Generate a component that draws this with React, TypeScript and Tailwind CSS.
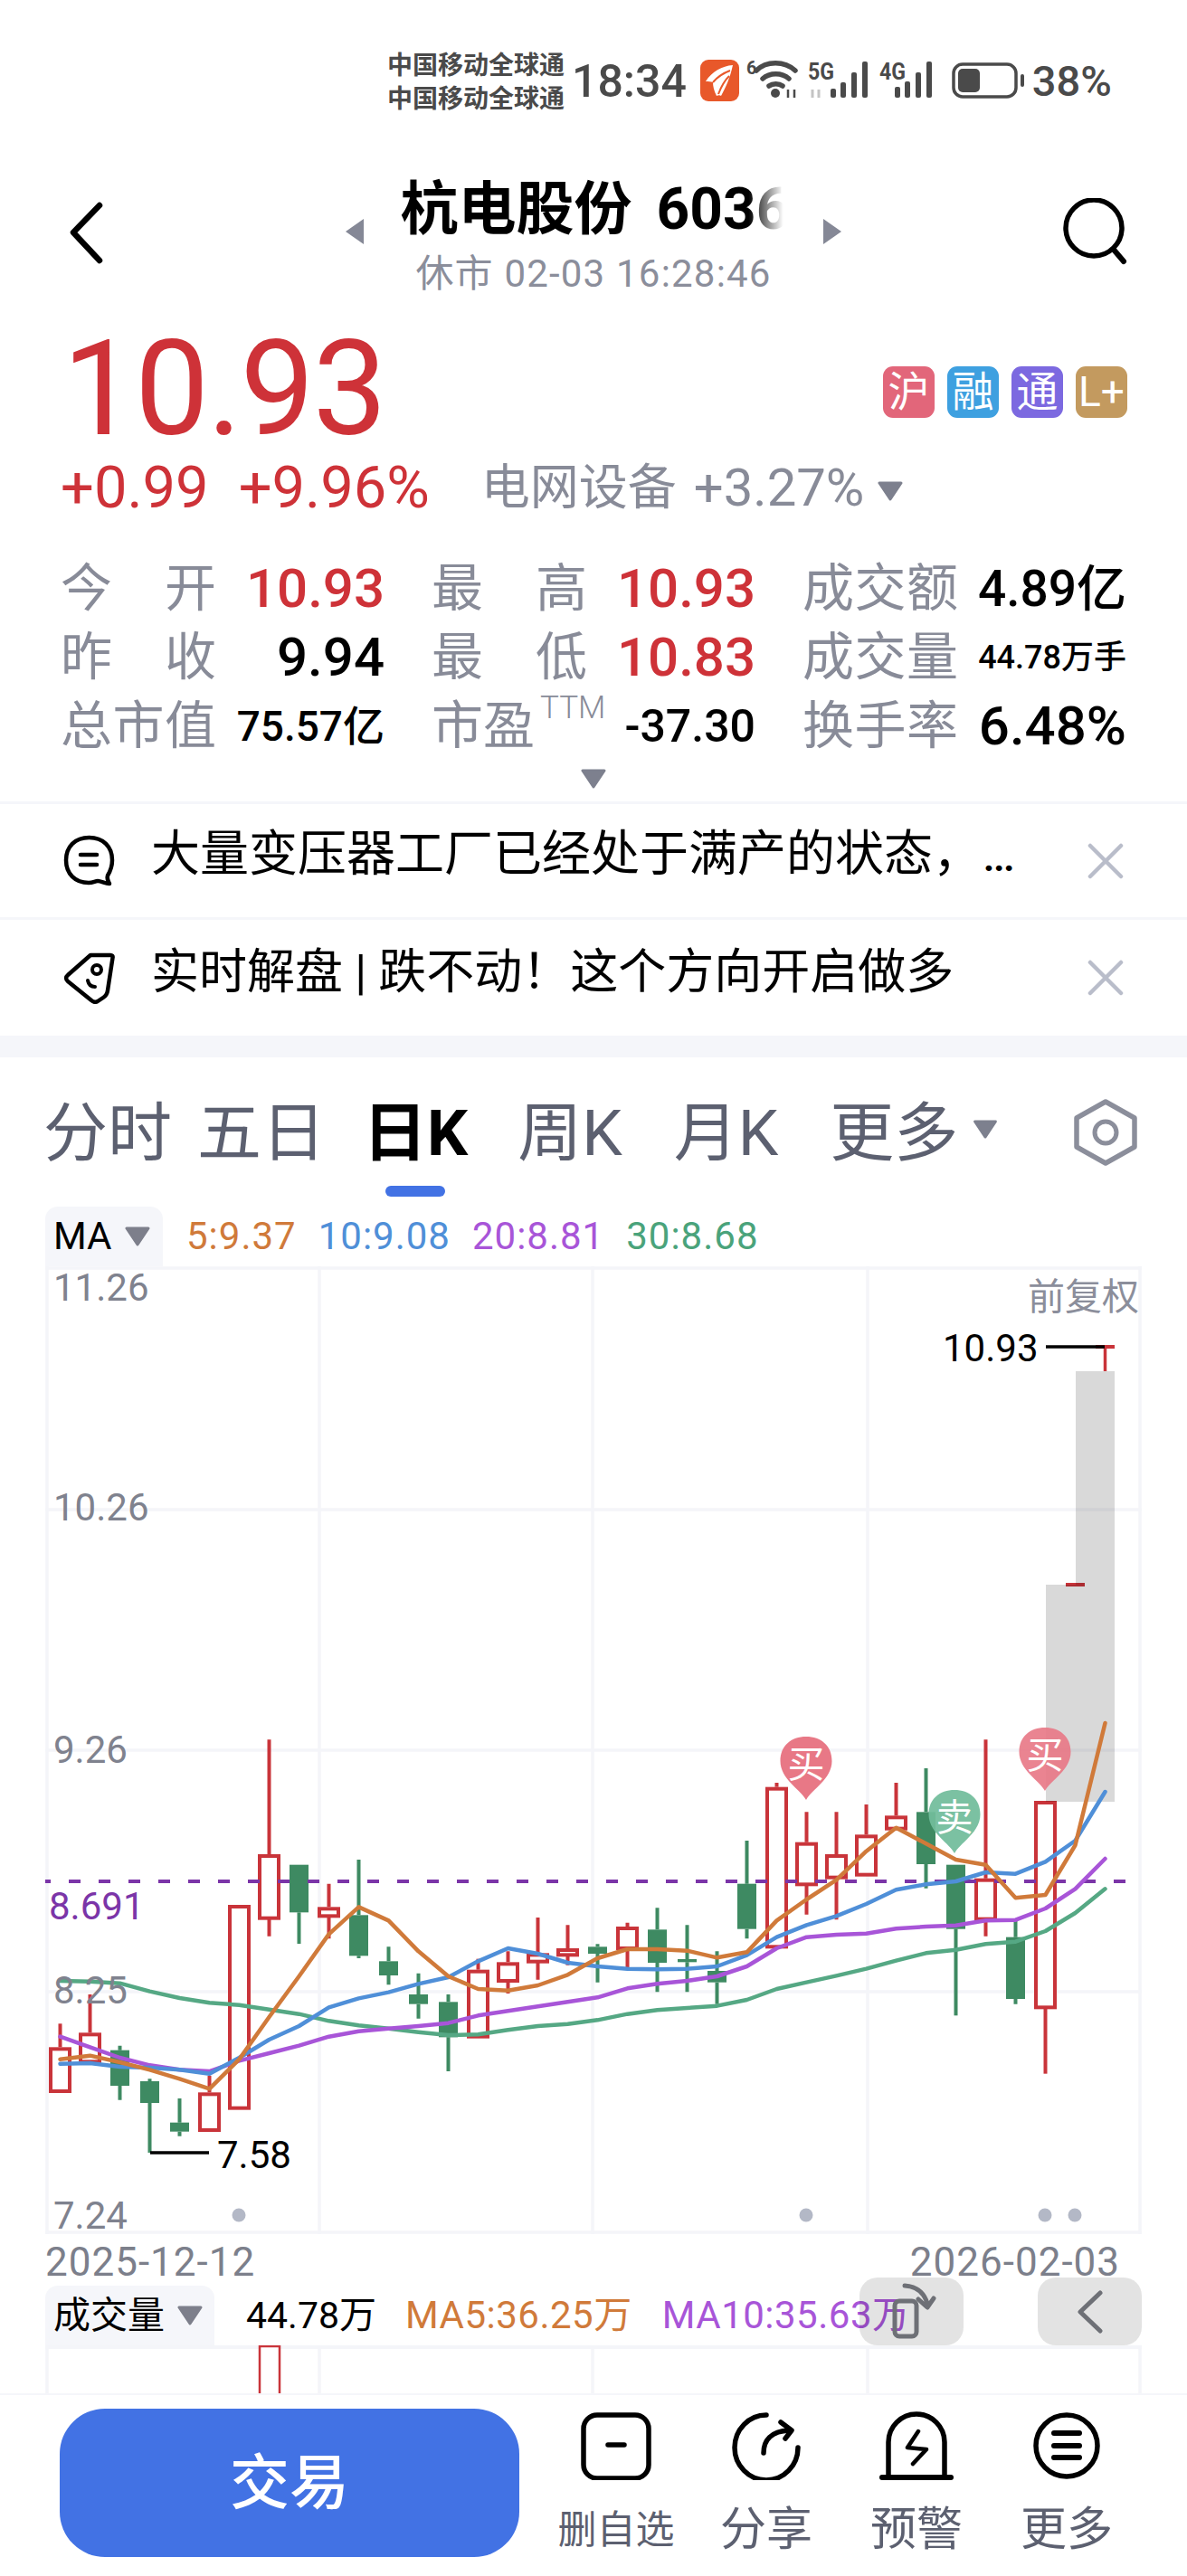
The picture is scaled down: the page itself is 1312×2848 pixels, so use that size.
import React from 'react';

type Candle = ['r' | 'g', number, number, number, number];

// values are read off the chart: y in thirds of a pixel from 1900
const candles: Candle[] = [
  ['r', 1012, 1090, 1236, 1236],
  ['r', 915, 1042, 1138, 1138],
  ['g', 1085, 1100, 1218, 1265],
  ['g', 1195, 1203, 1275, 1440],
  ['g', 1260, 1340, 1370, 1385],
  ['r', 1185, 1240, 1365, 1365],
  ['r', 618, 618, 1292, 1292],
  ['r', 70, 450, 662, 722],
  ['g', 485, 485, 643, 747],
  ['r', 548, 625, 655, 730],
  ['g', 468, 652, 787, 795],
  ['g', 757, 805, 852, 883],
  ['g', 845, 915, 947, 995],
  ['g', 915, 940, 1057, 1170],
  ['r', 797, 833, 1055, 1055],
  ['r', 772, 808, 870, 912],
  ['r', 660, 778, 806, 866],
  ['r', 685, 762, 784, 818],
  ['g', 748, 757, 780, 875],
  ['r', 677, 690, 762, 825],
  ['g', 628, 700, 810, 907],
  ['g', 685, 798, 808, 907],
  ['g', 772, 837, 875, 947],
  ['g', 405, 548, 698, 730],
  ['r', 213, 227, 757, 757],
  ['r', 310, 410, 550, 650],
  ['r', 310, 450, 527, 667],
  ['r', 285, 385, 518, 518],
  ['r', 213, 322, 365, 365],
  ['g', 165, 310, 483, 563],
  ['g', 485, 485, 698, 985],
  ['r', 70, 530, 665, 722],
  ['g', 670, 725, 930, 947],
  ['r', 273, 273, 958, 1178],
];

const ma5 = [1130, 1118, 1140, 1165, 1195, 1228, 1130, 990, 855, 715, 625, 670, 772, 855, 897, 902, 885, 850, 795, 765, 765, 770, 793, 775, 670, 600, 535, 440, 362, 415, 468, 485, 595, 585, 420, 15];
const ma10 = [1145, 1143, 1155, 1158, 1165, 1178, 1125, 1065, 1020, 958, 928, 908, 880, 858, 805, 762, 780, 810, 822, 830, 832, 830, 822, 785, 725, 685, 655, 615, 568, 550, 540, 510, 515, 475, 405, 243];
const ma20 = [1055, 1090, 1125, 1150, 1165, 1170, 1135, 1110, 1085, 1055, 1037, 1028, 1020, 1010, 985, 970, 955, 940, 925, 895, 880, 870, 855, 822, 762, 725, 717, 713, 697, 690, 686, 670, 668, 630, 565, 465];
const ma30 = [870, 872, 878, 905, 927, 943, 950, 965, 980, 1003, 1018, 1028, 1040, 1050, 1048, 1033, 1020, 1013, 1000, 980, 967, 960, 953, 933, 897, 875, 853, 830, 803, 778, 767, 748, 740, 705, 645, 565];

const cx = (i: number) => 66.5 + 33 * i;
const cy = (z: number) => 1900 + z / 3;
const points = (line: number[]) => line.map((z, i) => `${cx(i)},${cy(z)}`).join(' ');

const RED = '#c9343a';
const GREEN = '#3e8a62';
const GRID = '#f4f5f9';

function Caret({ className }: { className: string }) {
  return (
    <svg viewBox="0 0 30 22" className={className}>
      <path d="M3 2 H27 L15 20 Z" fill="currentColor" stroke="currentColor" strokeWidth="3" strokeLinejoin="round" />
    </svg>
  );
}

function StatusBar() {
  return (
    <div className="flex h-[130px] items-start pl-[428px] pt-[54px] text-[#4a4a4a]">
      <div className="w-[196px] text-[28px] font-bold leading-[37px]">
        <div>中国移动全球通</div>
        <div>中国移动全球通</div>
      </div>
      <div className="ml-[8px] mt-[8px] text-[50px] font-medium leading-[56px]">18:34</div>
      <svg viewBox="770 54 360 66" className="ml-[14px] h-[66px] w-[360px]">
        <rect x="771" y="66" width="43" height="46" rx="9" fill="#e8582a" />
        <path d="M807 72 C795 73 784 79 777 90 C780 90 783 90 785 91 C785 95 786 100 789 106 C791 105 793 105 794 106 C799 97 804 86 807 72 Z" fill="#fff" />
        <path d="M804 78 C796 81 790 85 785 91 M803 84 C798 89 794 96 791 104" fill="none" stroke="#e8582a" strokeWidth="2" />
        <text x="822" y="82" fontSize="20" fontWeight="700" fill="#4a4a4a">6</text>
        <g fill="none" stroke="#4a4a4a" strokeWidth="5.5" strokeLinecap="round">
          <path d="M833 78 C844 67 864 67 876 78" />
          <path d="M840 87 C848 80 861 80 869 87" />
          <path d="M847 95 C851 92 858 92 862 95" />
        </g>
        <circle cx="854" cy="103" r="5" fill="#4a4a4a" />
        <path d="M868 99 V108 M875 99 V108" stroke="#4a4a4a" strokeWidth="2.5" />
        <text x="890" y="88" fontSize="25" fontWeight="700" fill="#4a4a4a" textLength="29" lengthAdjust="spacingAndGlyphs">5G</text>
        <path d="M895 99 V108 M902 99 V108" stroke="#c4c4c4" strokeWidth="3" />
        <rect x="915" y="98" width="6" height="10" rx="2" fill="#4a4a4a" />
        <rect x="926" y="91" width="6" height="17" rx="2" fill="#4a4a4a" />
        <rect x="938" y="80" width="6" height="28" rx="2" fill="#4a4a4a" />
        <rect x="950" y="68" width="6" height="40" rx="2" fill="#4a4a4a" />
        <text x="969" y="88" fontSize="25" fontWeight="700" fill="#4a4a4a" textLength="29" lengthAdjust="spacingAndGlyphs">4G</text>
        <rect x="986" y="96" width="6" height="12" rx="2" fill="#4a4a4a" />
        <rect x="997" y="90" width="6" height="18" rx="2" fill="#4a4a4a" />
        <rect x="1009" y="80" width="6" height="28" rx="2" fill="#4a4a4a" />
        <rect x="1021" y="68" width="6" height="40" rx="2" fill="#4a4a4a" />
        <rect x="1051" y="71" width="69" height="36" rx="10" fill="none" stroke="#4a4a4a" strokeWidth="3.5" />
        <rect x="1056" y="76" width="24" height="26" rx="5" fill="#4a4a4a" />
        <rect x="1125" y="82" width="4" height="14" rx="2" fill="#4a4a4a" />
      </svg>
      <div className="ml-[8px] mt-[8px] text-[47px] font-medium leading-[56px]">38%</div>
    </div>
  );
}

function NavBar() {
  return (
    <div className="flex h-[200px] items-start pl-[74px] pt-[64px]">
      <svg viewBox="0 0 44 70" className="mt-[29px] h-[70px] w-[44px]">
        <path d="M36 4 L7 34 L36 65" fill="none" stroke="#000" strokeWidth="6.5" strokeLinecap="round" strokeLinejoin="round" />
      </svg>
      <div className="ml-[264px] flex w-[548px] flex-col items-center">
        <div className="flex w-full items-start justify-between">
          <svg viewBox="0 0 20 28" className="mt-[48px] h-[28px] w-[20px]">
            <path d="M20 0 V28 L0 14 Z" fill="#858896" />
          </svg>
          <div className="mt-[2px] h-[72px] w-[427px] overflow-hidden whitespace-nowrap text-[64px] font-bold leading-[72px] text-black [mask-image:linear-gradient(to_right,black_90%,transparent_99%)]">
            杭电股份<span className="ml-[27px]">6036</span>
          </div>
          <svg viewBox="0 0 20 28" className="mt-[48px] h-[28px] w-[20px]">
            <path d="M0 0 V28 L20 14 Z" fill="#858896" />
          </svg>
        </div>
        <div className="mt-[9px] text-[42px] leading-[48px] tracking-[1.2px] text-[#8b8e9b]">休市 02-03 16:28:46</div>
      </div>
      <svg viewBox="0 0 76 76" className="ml-[244px] mt-[25px] h-[76px] w-[76px]">
        <circle cx="35" cy="33" r="31" fill="none" stroke="#000" strokeWidth="5.5" />
        <path d="M57 57 L68 70" stroke="#000" strokeWidth="6" strokeLinecap="round" />
      </svg>
    </div>
  );
}

function Badge({ text, color }: { text: string; color: string }) {
  return (
    <div className={`flex h-[57px] w-[57px] items-center justify-center rounded-[11px] text-[46px] leading-none text-white ${color}`}>
      {text}
    </div>
  );
}

function PriceBlock() {
  return (
    <div>
      <div className="flex h-[130px] items-center pl-[69px] pr-[66px]">
        <div className="text-[146px] leading-[130px] tracking-[-2px] text-[#ce3238]">10.93</div>
        <div className="ml-auto mt-[4px] flex gap-[14px]">
          <Badge text="沪" color="bg-[#e2667a]" />
          <Badge text="融" color="bg-[#3ea0e0]" />
          <Badge text="通" color="bg-[#7c69e0]" />
          <Badge text="L+" color="bg-[#c39a5f]" />
        </div>
      </div>
      <div className="mt-[11px] flex h-[65px] items-center pl-[67px]">
        <span className="text-[65px] leading-[65px] text-[#ce3238]">+0.99</span>
        <span className="ml-[33px] text-[65px] leading-[65px] text-[#ce3238]">+9.96%</span>
        <span className="ml-[57px] text-[54px] leading-[65px] text-[#888b98]">电网设备</span>
        <span className="ml-[19px] text-[58px] leading-[65px] text-[#888b98]">+3.27%</span>
        <Caret className="ml-[14px] mt-[6px] h-[22px] w-[30px] text-[#7d808e]" />
      </div>
    </div>
  );
}

function Label({ chars }: { chars: string[] }) {
  return (
    <div className="flex w-[172px] justify-between text-[57px] leading-[76px] text-[#888b98]">
      {chars.map((c) => (
        <span key={c}>{c}</span>
      ))}
    </div>
  );
}

function Stat({ chars, value, className }: { chars: string[]; value: string; className: string }) {
  return (
    <div className="flex h-[76px] items-center justify-between">
      <Label chars={chars} />
      <div className={`font-medium leading-[76px] ${className}`}>{value}</div>
    </div>
  );
}

function Stats() {
  return (
    <div className="mt-[41px] grid grid-cols-[358px_358px_358px] gap-x-[52px] pl-[67px]">
      <Stat chars={['今', '开']} value="10.93" className="text-[60px] text-[#ce3238]" />
      <Stat chars={['最', '高']} value="10.93" className="text-[60px] text-[#ce3238]" />
      <Stat chars={['成', '交', '额']} value="4.89亿" className="text-[55px] text-black" />
      <Stat chars={['昨', '收']} value="9.94" className="text-[60px] text-black" />
      <Stat chars={['最', '低']} value="10.83" className="text-[60px] text-[#ce3238]" />
      <Stat chars={['成', '交', '量']} value="44.78万手" className="text-[36px] text-black" />
      <Stat chars={['总', '市', '值']} value="75.57亿" className="text-[46px] text-black" />
      <div className="flex h-[76px] items-center justify-between">
        <div className="flex w-[200px] items-start">
          <span className="text-[57px] leading-[76px] text-[#888b98]">市盈</span>
          <span className="ml-[6px] mt-[-2px] text-[35px] font-light leading-[40px] text-[#888b98]">TTM</span>
        </div>
        <div className="text-[50px] font-medium leading-[76px] text-black">-37.30</div>
      </div>
      <Stat chars={['换', '手', '率']} value="6.48%" className="text-[60px] text-black" />
    </div>
  );
}

function NewsRow({ icon, children }: { icon: React.ReactNode; children: React.ReactNode }) {
  return (
    <div className="flex h-[128px] items-center border-b-[3px] border-[#f5f6fa] pl-[70px] last:border-b-0">
      {icon}
      <div className="ml-[40px] w-[995px] whitespace-nowrap leading-[70px] text-black">{children}</div>
      <svg viewBox="0 0 40 40" className="ml-[40px] h-[40px] w-[40px]">
        <path d="M3 3 L37 37 M37 3 L3 37" stroke="#b9bdca" strokeWidth="4.5" strokeLinecap="round" />
      </svg>
    </div>
  );
}

function News() {
  return (
    <div>
      <div className="h-[3px] bg-[#f5f6fa]" />
      <NewsRow
        icon={
          <svg viewBox="0 0 57 57" className="h-[57px] w-[57px]">
            <path d="M28.5 3 C13 3 3 13 3 28 C3 43 13 53 28 53 C33 53 35 51 38 51 C42 51 46 54 51 54 C49 50 48 48 49 45 C52 40 54 35 54 28 C54 13 44 3 28.5 3 Z" fill="none" stroke="#000" strokeWidth="4.5" strokeLinejoin="round" />
            <path d="M19 22 H37 M19 33 H37" stroke="#000" strokeWidth="4.5" strokeLinecap="round" />
          </svg>
        }
      >
        <span className="text-[54px]">大量变压器工厂已经处于满产的状态，</span>
        <span className="ml-[2px] text-[42px] font-bold tracking-[-1px]">...</span>
      </NewsRow>
      <NewsRow
        icon={
          <svg viewBox="0 0 57 57" className="h-[57px] w-[57px]">
            <path d="M30 3 H52 C54 3 55 4 54.5 6 L49 42 C48.5 46 47 48 44 50 L38 54 C35 55.5 33 55 31 53 L5 32 C2.5 30 2.5 27 5 25 Z" fill="none" stroke="#000" strokeWidth="4.5" strokeLinejoin="round" />
            <circle cx="37" cy="19" r="5" fill="none" stroke="#000" strokeWidth="4" />
            <path d="M27 31 C28 36 31 38 35 38" fill="none" stroke="#000" strokeWidth="4" strokeLinecap="round" />
          </svg>
        }
      >
        <span className="text-[53px]">实时解盘 | 跌不动！这个方向开启做多</span>
      </NewsRow>
    </div>
  );
}

function Tabs() {
  return (
    <div className="flex h-[165px] items-start pl-[48px] pt-[44px] text-[#5c6070]">
      <div className="text-[71px] leading-[80px]">分时</div>
      <div className="ml-[28px] text-[71px] leading-[80px]">五日</div>
      <div className="ml-[41px] flex flex-col items-center">
        <div className="text-[71px] font-bold leading-[80px] text-black">日K</div>
        <div className="mt-[18px] h-[12px] w-[66px] rounded-full bg-[#4272e4]" />
      </div>
      <div className="ml-[55px] text-[71px] leading-[80px]">周K</div>
      <div className="ml-[57px] text-[71px] leading-[80px]">月K</div>
      <div className="ml-[57px] text-[71px] leading-[80px]">更多</div>
      <Caret className="ml-[15px] mt-[25px] h-[21px] w-[30px] text-[#7d808e]" />
      <svg viewBox="0 0 72 74" className="ml-[82px] mt-[2px] h-[74px] w-[72px]">
        <path d="M36 3 L68 21 V53 L36 71 L4 53 V21 Z" fill="none" stroke="#8b8e9b" strokeWidth="5.5" strokeLinejoin="round" />
        <circle cx="36" cy="37" r="12" fill="none" stroke="#8b8e9b" strokeWidth="5" />
      </svg>
    </div>
  );
}

function MaLegend() {
  return (
    <div className="flex h-[66px] items-center pl-[50px] text-[42px] leading-[66px]">
      <div className="flex h-[66px] w-[130px] items-center rounded-t-[14px] bg-[#f5f6fa] pl-[9px] text-black">
        <span>MA</span>
        <Caret className="ml-[14px] h-[22px] w-[30px] text-[#7d7f8b]" />
      </div>
      <span className="ml-[26px] tracking-[1px] text-[#d07a3a]">5:9.37</span>
      <span className="ml-[24px] tracking-[1px] text-[#4f8fd8]">10:9.08</span>
      <span className="ml-[24px] tracking-[1px] text-[#a855d8]">20:8.81</span>
      <span className="ml-[24px] tracking-[1px] text-[#4aa37b]">30:8.68</span>
    </div>
  );
}

function Pin({ x, y, color, text }: { x: number; y: number; color: string; text: string }) {
  return (
    <g transform={`translate(${x - 28.5} ${y})`}>
      <path d="M28.5 70 C22 58 0 47 0 27 C0 10 12 0 28.5 0 C45 0 57 10 57 27 C57 47 35 58 28.5 70 Z" fill={color} />
      <text x="28.5" y="45" textAnchor="middle" fontSize="41" fill="#fff">{text}</text>
    </g>
  );
}

function CandleMark({ candle, index }: { candle: Candle; index: number }) {
  const [kind, wickTop, top, bottom, wickBottom] = candle;
  const x = cx(index);
  const color = kind === 'r' ? RED : GREEN;
  return (
    <g>
      <path d={`M${x} ${cy(wickTop)} V${cy(top)} M${x} ${cy(bottom)} V${cy(wickBottom)}`} stroke={color} strokeWidth="4" />
      {kind === 'r' ? (
        <rect x={x - 10.5} y={cy(top) + 2} width="21" height={cy(bottom) - cy(top) - 2} fill="#fff" stroke={color} strokeWidth="4" />
      ) : (
        <rect x={x - 10.5} y={cy(top)} width="21" height={Math.max(cy(bottom) - cy(top), 3)} fill={color} />
      )}
    </g>
  );
}

function Chart() {
  const vertical = [52, 353, 655, 959, 1260];
  const horizontal = [1402, 1669, 1935, 2202, 2468];
  return (
    <svg viewBox="0 1400 1312 1070" className="block h-[1070px] w-[1312px] overflow-visible">
      {horizontal.map((y) => (
        <path key={y} d={`M50 ${y} H1262`} stroke={GRID} strokeWidth="3.5" />
      ))}
      {vertical.map((x) => (
        <path key={x} d={`M${x} 1400 V2470`} stroke={GRID} strokeWidth="3.5" />
      ))}
      {candles.map((c, i) => (
        <CandleMark key={i} candle={c} index={i} />
      ))}
      <path d="M1178 1752 H1199" stroke={RED} strokeWidth="4" />
      <path d="M1221.5 1489 V1516" stroke={RED} strokeWidth="3.5" />
      <path d="M1211 1489 H1232" stroke={RED} strokeWidth="4" />
      <path d="M1156 1752 H1189 V1516 H1232 V1992 H1156 Z" fill="#000" fillOpacity="0.15" />
      <path d="M50 2080 H1262" stroke="#7b35a8" strokeWidth="4" strokeDasharray="13 20" strokeDashoffset="7" />
      <path d="M1156 1489 H1221" stroke="#000" strokeWidth="3.5" />
      <path d="M166 2380 H231" stroke="#000" strokeWidth="3.5" />
      <g fill="none" strokeWidth="4.5" strokeLinejoin="round" strokeLinecap="round">
        <polyline points={points(ma30)} stroke="#55a884" />
        <polyline points={points(ma20)} stroke="#a855d8" />
        <polyline points={points(ma10)} stroke="#4f8fd8" />
        <polyline points={points(ma5)} stroke="#d07a3a" />
      </g>
      {[264, 891, 1155, 1188].map((x) => (
        <circle key={x} cx={x} cy="2449" r="7.5" fill="#b3b8c6" />
      ))}
      <Pin x={891} y={1920} color="#e87886" text="买" />
      <Pin x={1055} y={1979} color="#72bd9bee" text="卖" />
      <Pin x={1155} y={1910} color="#e87886e8" text="买" />
      <g fontSize="42" fill="#7f828e">
        <text x="59" y="1438">11.26</text>
        <text x="59" y="1681">10.26</text>
        <text x="59" y="1949">9.26</text>
        <text x="59" y="2215">8.25</text>
        <text x="59" y="2464">7.24</text>
      </g>
      <text x="54" y="2122" fontSize="42" fill="#7b35a8">8.691</text>
      <text x="1136" y="1448" fontSize="41" fill="#8b8e9b">前复权</text>
      <text x="1042" y="1505" fontSize="42" fill="#000">10.93</text>
      <text x="240" y="2397" fontSize="42" fill="#000">7.58</text>
    </svg>
  );
}

function VolumeHeader() {
  return (
    <div className="relative flex h-[75px] items-end pl-[50px] text-[42px] leading-[66px]">
      <div className="flex h-[66px] w-[187px] items-center rounded-t-[14px] bg-[#f5f6fa] pl-[9px] text-[41px] text-black">
        <span>成交量</span>
        <Caret className="ml-[13px] h-[22px] w-[30px] text-[#7d7f8b]" />
      </div>
      <span className="ml-[35px] text-[41px] text-black">44.78万</span>
      <span className="ml-[32px] tracking-[0.5px] text-[#d07a3a]">MA5:36.25万</span>
      <span className="ml-[33px] tracking-[0.5px] text-[#a855d8]">MA10:35.63万</span>
      <div className="absolute left-[950px] top-0 flex h-[75px] w-[115px] items-center justify-center rounded-[20px] bg-black/[0.11]">
        <svg viewBox="0 0 60 70" className="h-[70px] w-[60px]">
          <rect x="11" y="23" width="24" height="39" rx="5" fill="none" stroke="#6e7076" strokeWidth="5" />
          <path d="M22 6 C36 7 44 15 47 26 M37 21 L47 30 L54 20" fill="none" stroke="#6e7076" strokeWidth="5" strokeLinecap="round" strokeLinejoin="round" />
        </svg>
      </div>
      <div className="absolute left-[1147px] top-0 flex h-[75px] w-[115px] items-center justify-center rounded-[20px] bg-black/[0.11]">
        <svg viewBox="0 0 30 50" className="h-[50px] w-[30px]">
          <path d="M26 4 L4 25 L26 46" fill="none" stroke="#6e7076" strokeWidth="5" strokeLinecap="round" strokeLinejoin="round" />
        </svg>
      </div>
    </div>
  );
}

function VolumeChart() {
  return (
    <svg viewBox="0 2593 1312 53" className="block h-[53px] w-[1312px]">
      <path d="M50 2595 H1262" stroke={GRID} strokeWidth="4" />
      {[52, 353, 655, 959, 1260].map((x) => (
        <path key={x} d={`M${x} 2593 V2646`} stroke={GRID} strokeWidth="3.5" />
      ))}
      <rect x="287" y="2594" width="22" height="60" fill="#fff" stroke={RED} strokeWidth="2.5" />
    </svg>
  );
}

function ActionIcon({ label, labelClass, children }: { label: string; labelClass: string; children: React.ReactNode }) {
  return (
    <div className="flex flex-col items-center">
      <svg viewBox="0 0 82 76" className="h-[76px] w-[82px]" fill="none" stroke="#000" strokeWidth="5.5" strokeLinecap="round" strokeLinejoin="round">
        {children}
      </svg>
      <div className={`mt-[27px] h-[56px] leading-[56px] text-[#5c6070] ${labelClass}`}>{label}</div>
    </div>
  );
}

function BottomBar() {
  return (
    <div className="flex h-[202px] items-start border-t-[2px] border-[#f5f6fa] bg-white pl-[66px]">
      <div className="mt-[15px] flex h-[164px] w-[508px] items-center justify-center rounded-[50px] bg-[#4272e4] text-[66px] font-medium text-white">交易</div>
      <div className="ml-[24px] mt-[18px] grid w-[664px] grid-cols-4 justify-items-center">
        <ActionIcon label="删自选" labelClass="text-[43px]">
          <rect x="5" y="4" width="72" height="70" rx="15" />
          <path d="M32 37 H50" />
        </ActionIcon>
        <ActionIcon label="分享" labelClass="text-[51px]">
          <path d="M41 4 A35 36 0 1 0 76 40" />
          <path d="M38 46 C38 32 46 22 66 21" />
          <path d="M57 12 L69 21 L62 30" />
        </ActionIcon>
        <ActionIcon label="预警" labelClass="text-[51px]">
          <path d="M10 72 V34 A31 31 0 0 1 72 34 V72" />
          <path d="M3 73 H79" strokeWidth="6" />
          <path d="M43 22 L31 40 L52 42 L37 58" strokeWidth="4.5" />
        </ActionIcon>
        <ActionIcon label="更多" labelClass="text-[51px]">
          <circle cx="41" cy="38" r="34" />
          <path d="M27 24 H55 M27 38 H55 M27 51 H55" strokeWidth="6" />
        </ActionIcon>
      </div>
    </div>
  );
}

export default function App() {
  return (
    <div className="h-[2848px] w-[1312px] overflow-hidden bg-white [font-family:Roboto,'Noto_Sans_CJK_SC',sans-serif]">
      <StatusBar />
      <NavBar />
      <div className="pt-[36px]">
        <PriceBlock />
        <Stats />
        <div className="mt-[7px] flex justify-center">
          <Caret className="mt-[2px] h-[22px] w-[30px] text-[#7d808e]" />
        </div>
        <div className="h-[14px]" />
      </div>
      <News />
      <div className="h-[24px] bg-[#f5f6fa]" />
      <Tabs />
      <MaLegend />
      <Chart />
      <div className="flex h-[48px] items-start justify-between pl-[50px] pr-[74px] pt-[9px] text-[44px] leading-[44px] tracking-[1px] text-[#7c7f8b]">
        <span>2025-12-12</span>
        <span>2026-02-03</span>
      </div>
      <VolumeHeader />
      <VolumeChart />
      <BottomBar />
    </div>
  );
}
